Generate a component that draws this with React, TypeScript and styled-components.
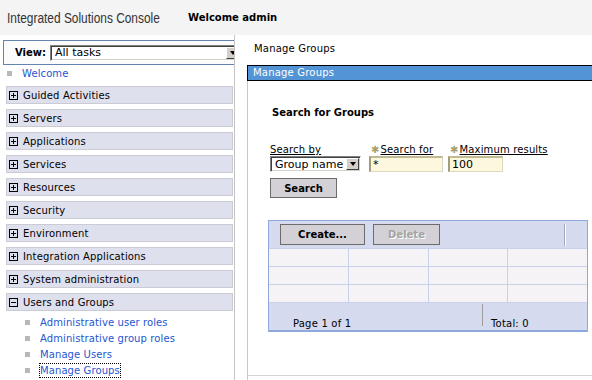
import styled, { createGlobalStyle } from "styled-components";

const GlobalStyle = createGlobalStyle`
  body {
    margin: 0;
    background: #fff;
    font-family: "DejaVu Sans", Verdana, sans-serif;
    font-size: 10px;
    color: #000;
  }
`;

const Page = styled.div`
  width: 592px;
  height: 380px;
  overflow: hidden;
  display: flex;
  flex-direction: column;
`;

const Header = styled.header`
  height: 35px;
  flex-shrink: 0;
  background: #f4f4f4;
  display: flex;
  align-items: center;
  padding-left: 7px;
`;

const Brand = styled.div`
  width: 181px;
  font-family: "Liberation Sans Narrow", "Liberation Sans", Arial, sans-serif;
  font-size: 14px;
  color: #333;
  white-space: nowrap;
`;

const BrandText = styled.span`
  display: inline-block;
  transform: scaleX(0.85);
  transform-origin: left center;
`;

const Greeting = styled.div`
  font-weight: bold;
`;

const Body = styled.div`
  flex: 1;
  display: flex;
  min-height: 0;
`;

const Nav = styled.nav`
  width: 234px;
  flex-shrink: 0;
  border-right: 1px solid #c4c4c4;
  overflow: hidden;
  padding-top: 5px;
`;

const ViewBox = styled.div`
  width: 260px;
  height: 23px;
  margin-left: 3px;
  border: 1px solid #6482b2;
  border-right: none;
  background: #fbfbfc;
  display: flex;
  align-items: center;
  padding-left: 11px;
`;

const ViewLabel = styled.span`
  font-weight: bold;
  margin-right: 4px;
`;

const Dropdown = styled.div<{ $width: number }>`
  width: ${({ $width }) => $width}px;
  height: 16px;
  flex-shrink: 0;
  box-sizing: border-box;
  border: 1px solid;
  border-color: #808080 #fff #fff #808080;
  box-shadow: inset 1px 1px 0 #404040, inset -1px -1px 0 #d4d0c8;
  background: #fff;
  display: flex;
  align-items: center;
  padding-left: 4px;
  font-size: 11px;
  white-space: nowrap;
`;

const DropArrow = styled.span`
  margin-left: auto;
  margin-right: 1px;
  width: 13px;
  height: 12px;
  box-sizing: border-box;
  background: #d4d0c8;
  border: 1px solid;
  border-color: #fff #404040 #404040 #fff;
  display: flex;
  align-items: center;
  justify-content: center;

  &::after {
    content: "";
    border-left: 3.5px solid transparent;
    border-right: 3.5px solid transparent;
    border-top: 4px solid #000;
  }
`;

const NavLink = styled.div<{ $indent?: boolean }>`
  height: 16px;
  display: flex;
  align-items: center;
  padding-left: ${({ $indent }) => ($indent ? 25 : 7)}px;
`;

const Bullet = styled.span`
  width: 5px;
  height: 5px;
  background: #b8b8b8;
  margin-right: 10px;
  flex-shrink: 0;
`;

const LinkText = styled.span<{ $focused?: boolean }>`
  color: #2556d0;
  line-height: 12px;
  padding-top: 1px;
  letter-spacing: 0.1px;
  outline: ${({ $focused }) => ($focused ? "1px dotted #000" : "none")};
`;

const CategoryList = styled.div`
  margin-top: 5px;
`;

const Category = styled.div<{ $open?: boolean }>`
  height: 16px;
  margin: 0 1px ${({ $open }) => ($open ? 3 : 5)}px 6px;
  border: 1px solid #cbcbd3;
  background: #dfe0ee;
  display: flex;
  align-items: center;
  padding-left: 2px;
`;

const CategoryLabel = styled.span`
  margin-left: 5px;
  letter-spacing: 0.15px;
`;

const Main = styled.main`
  flex: 1;
  min-width: 0;
  display: flex;
  flex-direction: column;
`;

const Breadcrumb = styled.div`
  height: 30px;
  box-sizing: border-box;
  padding: 8px 0 0 19px;
  line-height: 12px;
  letter-spacing: 0.2px;
`;

const TitleBar = styled.div`
  margin-left: 12px;
  height: 16px;
  box-sizing: border-box;
  border: 1px solid #000;
  border-right: none;
  background: #5294d6;
  color: #fff;
  line-height: 14px;
  padding-left: 5px;
  letter-spacing: 0.2px;
`;

const Panel = styled.section`
  flex: 1;
  margin-left: 12px;
  border-left: 1px solid #c8c8c8;
  padding: 26px 0 0 22px;
`;

const Heading = styled.div`
  margin-left: 2px;
  font-weight: bold;
  line-height: 12px;
`;

const FormRow = styled.div`
  margin-top: 25px;
  display: flex;
`;

const Field = styled.div<{ $width: number; $gap: number }>`
  width: ${({ $width }) => $width}px;
  margin-right: ${({ $gap }) => $gap}px;
  display: flex;
  flex-direction: column;
`;

const FieldLabel = styled.span`
  line-height: 12px;
  white-space: nowrap;
  text-decoration: underline;
  text-underline-offset: 1px;
  letter-spacing: 0.15px;
`;

const Required = styled.span`
  color: #aaa06a;
  font-size: 10px;
  margin: 0 1px 0 2px;
  text-decoration: none;
  display: inline-block;
`;

const TextInput = styled.div`
  height: 16px;
  box-sizing: border-box;
  background: #fdf7dd;
  border-style: solid;
  border-width: 2px 1px 1px 2px;
  border-color: #bfb994 #dcd8c6 #dcd8c6 #a49e78;
  font-size: 11px;
  line-height: 13px;
  padding-left: 2px;
`;

const Button = styled.div<{ $width: number; $disabled?: boolean }>`
  width: ${({ $width }) => $width}px;
  height: 21px;
  box-sizing: border-box;
  border: 1px solid #6c6c6c;
  background: #d4d1d6;
  font-weight: bold;
  display: flex;
  align-items: center;
  justify-content: center;
  color: ${({ $disabled }) => ($disabled ? "#a4a4a4" : "#000")};
  text-shadow: ${({ $disabled }) => ($disabled ? "1px 1px 0 #fff" : "none")};
`;

const SearchButton = styled(Button)`
  margin-top: 6px;
  height: 20px;
`;

const Table = styled.div`
  margin: 22px 0 0 -2px;
  width: 320px;
  box-sizing: border-box;
  border: 1px solid #8eaadc;
  border-bottom-width: 2px;
`;

const Toolbar = styled.div`
  height: 27px;
  background: #d5daee;
  display: flex;
  align-items: center;
  gap: 8px;
  padding-left: 11px;
`;

const ToolbarSeparator = styled.span`
  margin: 0 22px 0 auto;
  width: 1px;
  height: 22px;
  background: #a4a8bc;
  box-shadow: 1px 0 0 #fff;
`;

const Grid = styled.div`
  display: grid;
  grid-template-columns: repeat(4, 1fr);
  gap: 1px;
  background: #c8d0ea;
  border-top: 1px solid #c8d0ea;
  border-bottom: 1px solid #c8d0ea;
`;

const Cell = styled.div`
  height: 17px;
  background: #f6f3f7;
`;

const Footer = styled.div`
  height: 27px;
  background: #d5daee;
  display: flex;
`;

const FooterCell = styled.div<{ $width?: number; $pad: number }>`
  width: ${({ $width }) => ($width ? `${$width}px` : "auto")};
  box-sizing: border-box;
  padding: 15px 0 0 ${({ $pad }) => $pad}px;
  line-height: 12px;
  letter-spacing: 0.2px;
`;

const FooterSeparator = styled.span`
  width: 1px;
  margin: 1px 0 4px;
  background: #9c9c9c;
`;

const Divider = styled.div`
  margin: 43px 0 0 -22px;
  border-top: 1px solid #d4d4d4;
`;

function Toggle({ open }: { open?: boolean }) {
  return (
    <svg width="9" height="9" viewBox="0 0 9 9" shapeRendering="crispEdges">
      <rect x="0.5" y="0.5" width="8" height="8" fill="none" stroke="#000" />
      <path d="M2 4.5h5" stroke="#000" />
      {!open && <path d="M4.5 2v5" stroke="#000" />}
    </svg>
  );
}

const categories = [
  "Guided Activities",
  "Servers",
  "Applications",
  "Services",
  "Resources",
  "Security",
  "Environment",
  "Integration Applications",
  "System administration",
];

const userLinks = [
  "Administrative user roles",
  "Administrative group roles",
  "Manage Users",
  "Manage Groups",
];

export default function App() {
  return (
    <>
      <GlobalStyle />
      <Page>
        <Header>
          <Brand>
            <BrandText>Integrated Solutions Console</BrandText>
          </Brand>
          <Greeting>Welcome admin</Greeting>
        </Header>
        <Body>
          <Nav>
            <ViewBox>
              <ViewLabel>View:</ViewLabel>
              <Dropdown $width={191}>
                All tasks
                <DropArrow />
              </Dropdown>
            </ViewBox>
            <NavLink>
              <Bullet />
              <LinkText>Welcome</LinkText>
            </NavLink>
            <CategoryList>
              {categories.map((name) => (
                <Category key={name}>
                  <Toggle />
                  <CategoryLabel>{name}</CategoryLabel>
                </Category>
              ))}
              <Category $open>
                <Toggle open />
                <CategoryLabel>Users and Groups</CategoryLabel>
              </Category>
              {userLinks.map((name, i) => (
                <NavLink key={name} $indent>
                  <Bullet />
                  <LinkText $focused={i === userLinks.length - 1}>{name}</LinkText>
                </NavLink>
              ))}
            </CategoryList>
          </Nav>
          <Main>
            <Breadcrumb>Manage Groups</Breadcrumb>
            <TitleBar>Manage Groups</TitleBar>
            <Panel>
              <Heading>Search for Groups</Heading>
              <FormRow>
                <Field $width={91} $gap={8}>
                  <FieldLabel>Search by</FieldLabel>
                  <Dropdown $width={91}>
                    Group name
                    <DropArrow />
                  </Dropdown>
                </Field>
                <Field $width={74} $gap={5}>
                  <FieldLabel>
                    <Required>✱</Required>Search for
                  </FieldLabel>
                  <TextInput>*</TextInput>
                </Field>
                <Field $width={55} $gap={0}>
                  <FieldLabel>
                    <Required>✱</Required>Maximum results
                  </FieldLabel>
                  <TextInput>100</TextInput>
                </Field>
              </FormRow>
              <SearchButton $width={67}>Search</SearchButton>
              <Table>
                <Toolbar>
                  <Button $width={85}>Create...</Button>
                  <Button $width={67} $disabled>
                    Delete
                  </Button>
                  <ToolbarSeparator />
                </Toolbar>
                <Grid>
                  {Array.from({ length: 12 }, (_, i) => (
                    <Cell key={i} />
                  ))}
                </Grid>
                <Footer>
                  <FooterCell $width={213} $pad={24}>
                    Page 1 of 1
                  </FooterCell>
                  <FooterSeparator />
                  <FooterCell $pad={8}>Total: 0</FooterCell>
                </Footer>
              </Table>
              <Divider />
            </Panel>
          </Main>
        </Body>
      </Page>
    </>
  );
}
